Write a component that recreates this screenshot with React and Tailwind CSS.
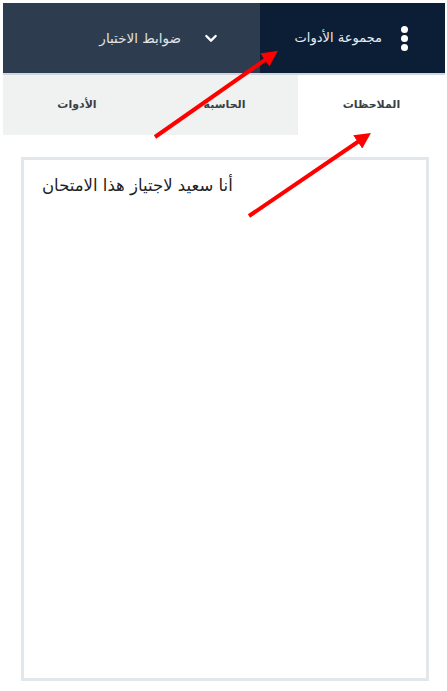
export default function App() {
  return (
    <div className="relative w-[447px] h-[691px] bg-white pt-[3px] pl-[3px] pr-[2px]" style={{ fontFamily: '"DejaVu Sans", sans-serif' }}>
      <div dir="rtl" className="flex h-[70px]">
        <div className="w-[185px] bg-[#0b1e35] flex items-center text-[#e8ecf0]">
          <div className="w-[7px] flex flex-col items-center gap-[2px] mr-[37px]">
            <span className="w-[7px] h-[7px] rounded-full bg-white" />
            <span className="w-[7px] h-[7px] rounded-full bg-white" />
            <span className="w-[7px] h-[7px] rounded-full bg-white" />
          </div>
          <span className="mr-[19px] text-[13px]">مجموعة الأدوات</span>
        </div>
        <div className="flex-1 bg-[#2d3d4f] flex items-center text-[#e0e4e8]">
          <svg className="mr-[41px]" width="16" height="16" viewBox="0 0 24 24" fill="none" stroke="#fff" strokeWidth="3.5" strokeLinecap="round" strokeLinejoin="round"><path d="M5 9l7 7 7-7" /></svg>
          <span className="mr-[22px] text-[13.5px]">ضوابط الاختبار</span>
        </div>
      </div>
      <div className="h-[2px] bg-[#cfd6dd]" />
      <div dir="rtl" className="flex h-[60px] text-[11px] font-bold text-[#3a3f45]">
        <div className="w-[147px] bg-white flex items-center justify-center">الملاحظات</div>
        <div className="w-[147px] bg-[#f0f2f2] flex items-center justify-center">الحاسبة</div>
        <div className="flex-1 bg-[#f0f2f2] flex items-center justify-center">الأدوات</div>
      </div>
      <div className="ml-[18px] mt-[22px] w-[408px] h-[524px] border-[3px] border-[#e2e7eb] px-[18px] pt-[14px]">
        <p dir="rtl" className="text-left text-[16.5px] text-[#222]">أنا سعيد لاجتياز هذا الامتحان</p>
      </div>
      <svg className="absolute left-0 top-0 pointer-events-none" width="447" height="691">
        <defs>
          <marker id="ah" markerWidth="4" markerHeight="4" refX="2.2" refY="2" orient="auto">
            <path d="M0,0 L4,2 L0,4 z" fill="#ff0000" />
          </marker>
        </defs>
        <line x1="155" y1="137" x2="272" y2="55" stroke="#ff0000" strokeWidth="4" markerEnd="url(#ah)" />
        <line x1="249" y1="216" x2="365" y2="137" stroke="#ff0000" strokeWidth="4" markerEnd="url(#ah)" />
      </svg>
    </div>
  )
}
